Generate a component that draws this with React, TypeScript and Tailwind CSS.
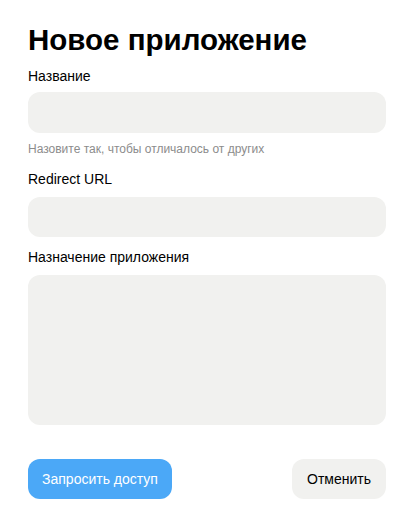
export default function App() {
  return (
    <div className="min-h-screen bg-white px-7 pt-6 font-['Liberation_Sans',Arial,sans-serif] text-black">
      <h1 className="text-[29.5px] leading-8 font-bold">Новое приложение</h1>

      <label className="mt-[10px] block text-sm leading-5">Название</label>
      <input className="mt-[6px] block h-[41px] w-full rounded-xl bg-[#f1f1ef] px-4 outline-none" />
      <p className="mt-2 text-xs leading-4 text-[#8c8c8c]">
        Назовите так, чтобы отличалось от других
      </p>

      <label className="mt-3 block text-sm leading-5">Redirect URL</label>
      <input className="mt-2 block h-10 w-full rounded-xl bg-[#f1f1ef] px-4 outline-none" />

      <label className="mt-[10px] block text-sm leading-5">Назначение приложения</label>
      <textarea className="mt-2 block h-[150px] w-full resize-none rounded-xl bg-[#f1f1ef] p-4 outline-none" />

      <div className="mt-[34px] flex items-center justify-between">
        <button className="h-10 w-[144px] rounded-xl bg-[#4ba8f7] text-sm text-white">
          Запросить доступ
        </button>
        <button className="h-10 w-[94px] rounded-xl bg-[#f1f1ef] text-sm text-black">
          Отменить
        </button>
      </div>
    </div>
  )
}
